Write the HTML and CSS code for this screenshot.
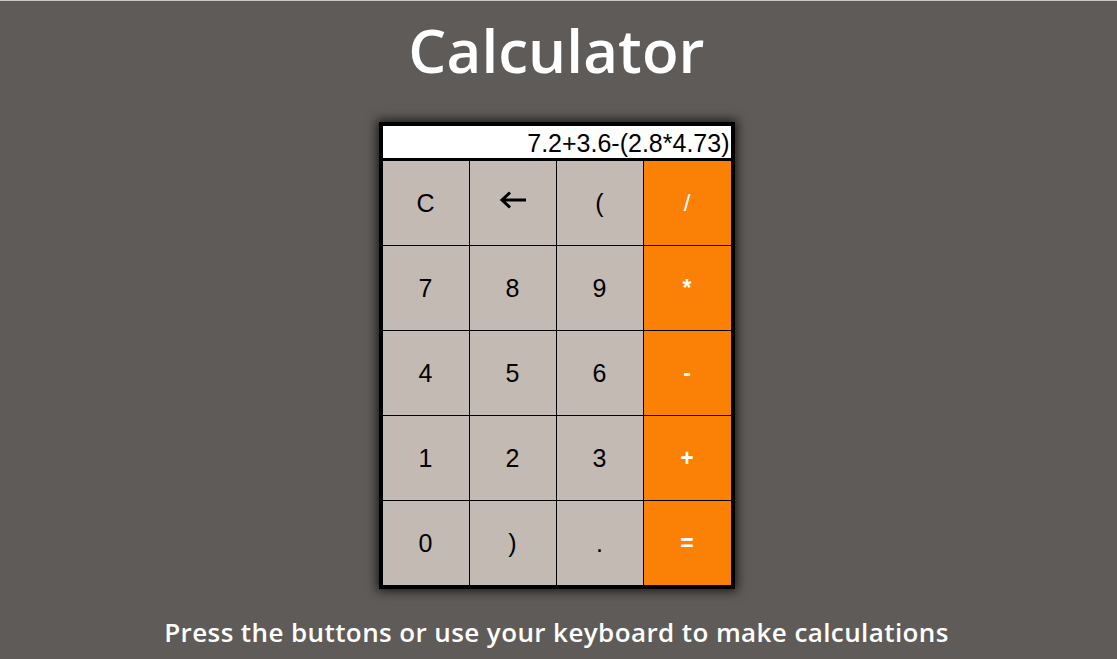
FILE: index.html
```html
<!DOCTYPE html>
<html lang="en">
<head>
<meta charset="utf-8">
<title>Calculator</title>
<link rel="stylesheet" href="styles.css">
</head>
<body>
<main class="page">
  <h1 class="title">Calculator</h1>
  <div class="calc">
    <div class="display">7.2+3.6-(2.8*4.73)</div>
    <div class="keys">
      <button class="key">C</button>
      <button class="key" aria-label="Backspace"><svg class="arrow" width="28" height="18" viewBox="0 0 28 18"><path d="M27 9H3M11 1.5L3 9l8 7.5" fill="none" stroke="#000" stroke-width="3"/></svg></button>
      <button class="key">(</button>
      <button class="key op thin">/</button>
      <button class="key">7</button>
      <button class="key">8</button>
      <button class="key">9</button>
      <button class="key op">*</button>
      <button class="key">4</button>
      <button class="key">5</button>
      <button class="key">6</button>
      <button class="key op">-</button>
      <button class="key">1</button>
      <button class="key">2</button>
      <button class="key">3</button>
      <button class="key op">+</button>
      <button class="key">0</button>
      <button class="key">)</button>
      <button class="key">.</button>
      <button class="key op">=</button>
    </div>
  </div>
  <p class="hint">Press the buttons or use your keyboard to make calculations</p>
</main>
</body>
</html>
```

FILE: styles.css
```css
html, body {
  margin: 0;
  padding: 0;
}
body {
  background: #5f5b58;
  border-top: 1px solid #c9c9c9;
  height: 658px;
  overflow: hidden;
  font-family: "Liberation Sans", Arial, sans-serif;
}
.page {
  display: flex;
  flex-direction: column;
  align-items: center;
  margin-right: 4px;
}
.title {
  margin: 16px 0 0 0;
  font-family: "Open Sans", "Noto Sans", sans-serif;
  font-weight: 600;
  font-size: 60px;
  line-height: 66px;
  color: #ffffff;
  letter-spacing: 0.1px;
}
.calc {
  margin-top: 39px;
  width: 348px;
  border: 4px solid #000;
  box-shadow: 0 0 10px 2px rgba(0, 0, 0, 0.75);
  background: #000;
}
.display {
  height: 32px;
  background: #fff;
  border-bottom: 2px solid #000;
  text-align: right;
  font-size: 25px;
  line-height: 34px;
  color: #000;
  padding-right: 1px;
  white-space: nowrap;
}
.keys {
  display: grid;
  grid-template-columns: repeat(4, 87px);
  grid-auto-rows: 85px;
}
.key {
  box-sizing: border-box;
  margin: 0;
  padding: 0;
  border: 0;
  border-top: 1px solid #000;
  border-right: 1px solid #000;
  background: #c3bab4;
  font-family: "Liberation Sans", Arial, sans-serif;
  font-size: 25px;
  color: #000;
}
.arrow {
  display: block;
  margin: 0 auto 7px auto;
}
.key.op {
  background: #fa8006;
  color: #fff;
  border-right: 0;
  font-size: 23px;
  font-weight: bold;
}
.key.op.thin {
  font-weight: normal;
  font-size: 24px;
}
.hint {
  margin: 25px 0 0 0;
  font-family: "Open Sans", "Noto Sans", sans-serif;
  font-weight: 600;
  font-size: 26px;
  color: #fff;
  letter-spacing: 0.4px;
}
```
